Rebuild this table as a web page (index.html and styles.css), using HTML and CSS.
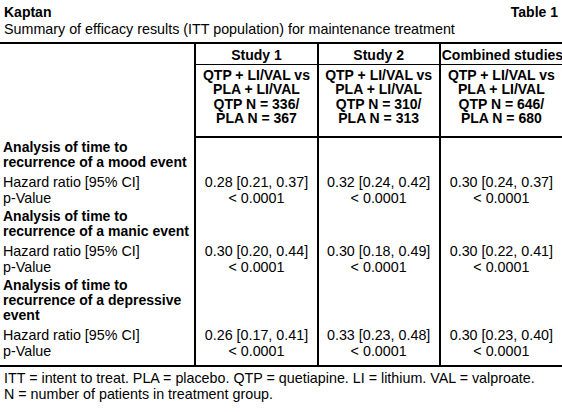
FILE: index.html
```html
<!DOCTYPE html>
<html lang="en">
<head>
    <meta charset="UTF-8">
    <meta name="viewport" content="width=device-width, initial-scale=1.0">
    <title>Kaptan - Table 1</title>
    <link rel="stylesheet" href="styles.css">
</head>
<body>

    <div class="caption">
        <div class="caption-top">
            <span class="author">Kaptan</span>
            <span class="label">Table 1</span>
        </div>
        <div class="title">Summary of efficacy results (ITT population) for maintenance treatment</div>
    </div>

    <table class="results">
        <colgroup>
            <col class="col-label">
            <col class="col-study">
            <col class="col-study">
            <col class="col-study">
        </colgroup>
        <thead>
            <tr class="studies">
                <th class="blank" rowspan="2"></th>
                <th>Study 1</th>
                <th>Study 2</th>
                <th>Combined studies</th>
            </tr>
            <tr class="arms">
                <th>QTP + LI/VAL vs<br>PLA + LI/VAL<br>QTP N = 336/<br>PLA N = 367</th>
                <th>QTP + LI/VAL vs<br>PLA + LI/VAL<br>QTP N = 310/<br>PLA N = 313</th>
                <th>QTP + LI/VAL vs<br>PLA + LI/VAL<br>QTP N = 646/<br>PLA N = 680</th>
            </tr>
        </thead>
        <tbody>
            <tr class="heading">
                <td>Analysis of time to<br>recurrence of a mood event</td>
                <td></td><td></td><td></td>
            </tr>
            <tr>
                <td>Hazard ratio [95% CI]</td>
                <td>0.28 [0.21, 0.37]</td>
                <td>0.32 [0.24, 0.42]</td>
                <td>0.30 [0.24, 0.37]</td>
            </tr>
            <tr>
                <td>p-Value</td>
                <td>&lt; 0.0001</td>
                <td>&lt; 0.0001</td>
                <td>&lt; 0.0001</td>
            </tr>
            <tr class="heading">
                <td>Analysis of time to<br>recurrence of a manic event</td>
                <td></td><td></td><td></td>
            </tr>
            <tr>
                <td>Hazard ratio [95% CI]</td>
                <td>0.30 [0.20, 0.44]</td>
                <td>0.30 [0.18, 0.49]</td>
                <td>0.30 [0.22, 0.41]</td>
            </tr>
            <tr>
                <td>p-Value</td>
                <td>&lt; 0.0001</td>
                <td>&lt; 0.0001</td>
                <td>&lt; 0.0001</td>
            </tr>
            <tr class="heading">
                <td>Analysis of time to<br>recurrence of a depressive<br>event</td>
                <td></td><td></td><td></td>
            </tr>
            <tr>
                <td>Hazard ratio [95% CI]</td>
                <td>0.26 [0.17, 0.41]</td>
                <td>0.33 [0.23, 0.48]</td>
                <td>0.30 [0.23, 0.40]</td>
            </tr>
            <tr class="last">
                <td>p-Value</td>
                <td>&lt; 0.0001</td>
                <td>&lt; 0.0001</td>
                <td>&lt; 0.0001</td>
            </tr>
        </tbody>
    </table>

    <div class="notes">
        ITT = intent to treat. PLA = placebo. QTP = quetiapine. LI = lithium. VAL = valproate.<br>
        N = number of patients in treatment group.
    </div>

</body>
</html>
```

FILE: styles.css
```css
body {
    margin: 0;
    background-color: #fff;
    color: #000;
    font-family: "Liberation Sans", Arial, sans-serif;
    font-size: 14.3px;
    line-height: 15px;
}
.caption { padding: 4px 4px 0 4px; }
.caption-top { display: flex; justify-content: space-between; font-weight: bold; font-size: 14px; line-height: 16px; }
.title { line-height: 18px; }

.results {
    width: 562px;
    margin-top: 4px;
    border-collapse: collapse;
    table-layout: fixed;
    border-top: 2px solid #000;
    border-bottom: 2px solid #000;
}
.col-label { width: 195px; }
.col-study { width: 122px; }
.results th, .results td {
    padding: 0 3px;
    vertical-align: top;
    white-space: nowrap;
}
.results th { font-size: 14px; }
.results th + th, .results td + td,
.results .arms th { border-left: 2px solid #000; text-align: center; }
.results .blank { border-left: none; }
.results .studies th { height: 21px; padding: 4px 1px 0; box-sizing: border-box; }
.results .studies th + th { border-bottom: 1px solid #000; }
.results .arms th { padding: 3px 2px 10px; border-bottom: 2px solid #000; line-height: 14.5px; }
.results td { text-align: left; height: 16px; line-height: 16px; }
.results td + td { text-align: center; }
.results .heading td { font-weight: bold; font-size: 14px; padding-top: 3px; padding-bottom: 4px; line-height: 15px; }
.results .last td { padding-bottom: 6px; }

.notes { padding: 3px 4px 0 4px; line-height: 16px; }
```
